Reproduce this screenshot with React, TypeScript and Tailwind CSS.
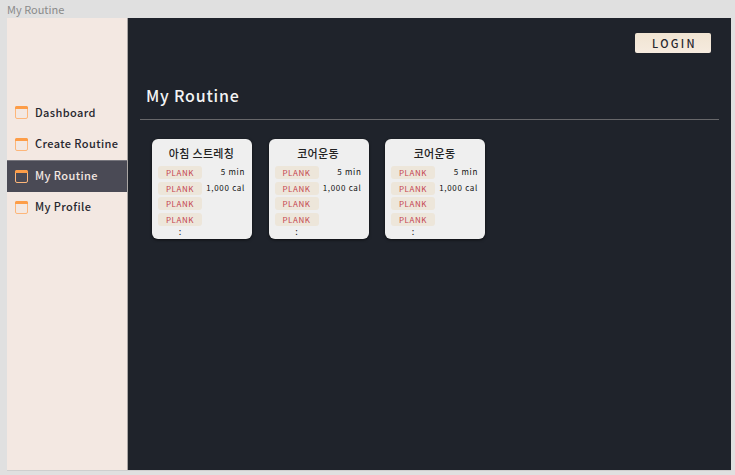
import React from 'react';

const FONT = '"Noto Sans CJK KR", "Noto Sans", sans-serif';

const menu = ['Dashboard', 'Create Routine', 'My Routine', 'My Profile'];
const cards = ['아침 스트레칭', '코어운동', '코어운동'];

const WindowIcon: React.FC = () => (
  <svg width="13" height="13" viewBox="0 0 13 13" className="shrink-0">
    <rect x="0.5" y="0.5" width="12" height="12" rx="1.5" fill="none" stroke="#fdb67a" />
    <path d="M0 3V1.5A1.5 1.5 0 0 1 1.5 0h10A1.5 1.5 0 0 1 13 1.5V3z" fill="#fd9d48" />
  </svg>
);

const Card: React.FC<{ title: string }> = ({ title }) => (
  <div className="w-[100px] h-[100px] rounded-[6px] bg-[#efefef] shadow-[0_1px_3px_rgba(0,0,0,0.6)] pt-[7px] pl-[6px] pr-[7px]">
    <div className="text-center text-[11px] leading-[14px] font-medium text-[#222222] tracking-[0.3px]">{title}</div>
    <div className="mt-[6px] flex justify-between">
      <div className="flex flex-col gap-[2.67px]">
        {[0, 1, 2, 3].map((i) => (
          <div
            key={i}
            className="w-[44px] h-[13px] rounded-[3px] bg-[#ede6da] text-center text-[8px] leading-[13px] tracking-[0.6px] text-[#c4444f]"
          >
            PLANK
          </div>
        ))}
        <div className="w-[44px] h-[9px] -mt-[2px] text-center text-[9px] leading-[9px] text-[#222222]">:</div>
      </div>
      <div className="flex flex-col gap-[2.67px] items-end">
        <div className="h-[13px] text-[8px] leading-[12px] tracking-[0.7px] text-[#111111]">5 min</div>
        <div className="h-[13px] text-[8px] leading-[12px] tracking-[0.7px] text-[#111111]">1,000 cal</div>
      </div>
    </div>
  </div>
);

export default function App() {
  return (
    <div className="w-[735px] h-[475px] bg-[#e0e0e0] flex flex-col overflow-hidden" style={{ fontFamily: FONT }}>
      <div className="h-[18px] pl-[7px] text-[11px] leading-[18px] text-[#8a8a8a]">My Routine</div>
      <div className="h-[453px] ml-[7px] mr-[4px] flex border-b border-[#cfcfcf]">
        <aside className="w-[121px] shrink-0 bg-[#f3e8e2] border-r border-[#a9a5a3] pt-[79px]">
          {menu.map((m) => (
            <div
              key={m}
              className={`h-[31.5px] pl-[8px] flex items-center gap-[7px] text-[11px] font-medium tracking-[0.4px] ${
                m === 'My Routine' ? 'bg-[#4a4a55] text-[#f3e8e2] border-t border-[#77767d]' : 'text-[#26262e]'
              }`}
            >
              <WindowIcon />
              <span className="-mt-[2px]">{m}</span>
            </div>
          ))}
        </aside>
        <main className="flex-1 bg-[#1f232b] flex flex-col">
          <div className="flex justify-end pt-[15px] pr-[20px]">
            <button className="w-[76px] h-[20px] pl-[3px] rounded-[2px] bg-gradient-to-b from-[#f0e4d2] to-[#f6ebdf] text-[11px] leading-[20px] font-medium tracking-[2.3px] text-[#26262c]">
              LOGIN
            </button>
          </div>
          <h1 className="mt-[31px] ml-[18px] text-[16px] leading-[22px] font-medium tracking-[0.8px] text-[#f4f4f4]">My Routine</h1>
          <div className="mt-[13px] ml-[12px] mr-[12px] h-px bg-[#67676a]" />
          <div className="mt-[19px] ml-[24px] flex gap-[16.5px]">
            {cards.map((c, i) => (
              <Card key={i} title={c} />
            ))}
          </div>
        </main>
      </div>
    </div>
  );
}
